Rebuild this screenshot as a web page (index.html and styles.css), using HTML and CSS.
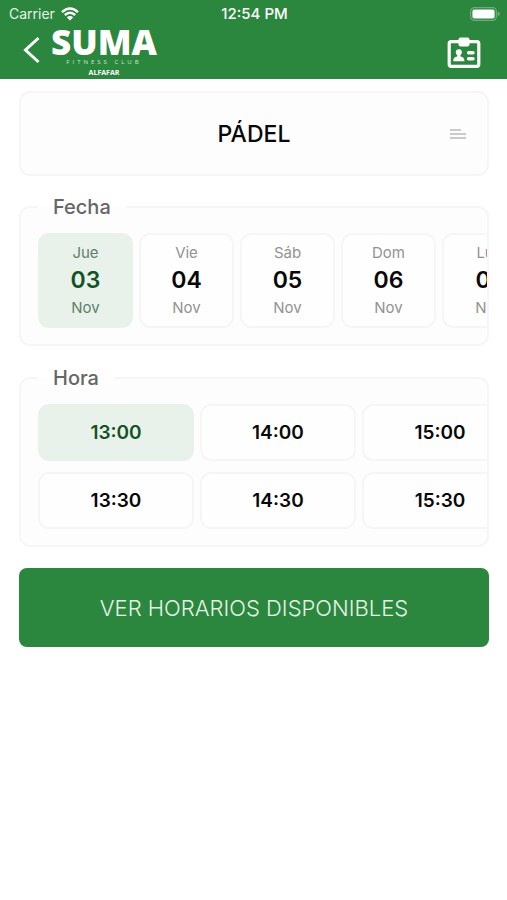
FILE: index.html
```html
<!DOCTYPE html>
<html lang="es">
<head>
<meta charset="utf-8">
<meta name="viewport" content="width=device-width, initial-scale=1">
<title>Suma Fitness Club</title>
<link rel="stylesheet" href="styles.css">
</head>
<body>
<header class="header">
  <div class="status">
    <div class="carrier">
      <span>Carrier</span>
      <svg class="wifi" viewBox="0 0 18 14" aria-hidden="true">
        <path d="M1 5.2Q9-2.2 17 5.2M3.8 8Q9 3.4 14.2 8" fill="none" stroke="currentColor" stroke-width="2.4"/>
        <path d="M9 13.6 5.8 10.2Q9 7.6 12.2 10.2Z" fill="currentColor"/>
      </svg>
    </div>
    <span class="time">12:54 PM</span>
    <svg class="battery" viewBox="0 0 30 14" aria-hidden="true">
      <rect x="0.6" y="0.6" width="25.8" height="12.8" rx="4" fill="none" stroke="#6dac7a" stroke-width="1.2"/>
      <rect x="2.4" y="2.4" width="22.2" height="9.2" rx="2" fill="#fff"/>
      <path d="M27.6 4.6Q30 5.6 30 7T27.6 9.4Z" fill="#6dac7a"/>
    </svg>
  </div>
  <div class="bar">
    <div class="brand">
      <button class="icon-button" type="button" aria-label="Volver">
        <svg class="back" viewBox="0 0 18 28" aria-hidden="true"><path d="M15.5 2 2.5 14 15.5 26" fill="none" stroke="currentColor" stroke-width="3"/></svg>
      </button>
      <div class="logo">
        <span class="logo-name">SUMA</span>
        <span class="logo-tag">FITNESS CLUB</span>
        <span class="logo-place">ALFAFAR</span>
      </div>
    </div>
    <button class="icon-button" type="button" aria-label="Carné">
      <svg class="badge" viewBox="0 0 34 32" aria-hidden="true">
        <rect x="2.2" y="4.7" width="29.6" height="24.6" rx="2" fill="none" stroke="currentColor" stroke-width="3.2"/>
        <rect x="11.5" y="0.6" width="11" height="9" rx="2" fill="currentColor"/>
        <circle cx="11.8" cy="15.2" r="3" fill="currentColor"/>
        <path d="M10.2 16.6h3.2v3q4 .4 4 4.6H6.2q0-4.2 4-4.6Z" fill="currentColor"/>
        <path d="M21.6 15.8h4.4M21.6 21.8h4.4" stroke="currentColor" stroke-width="3.4" stroke-linecap="round"/>
      </svg>
    </button>
  </div>
</header>
<main class="content">
  <button class="activity" type="button">
    <span class="activity-name">PÁDEL</span>
    <svg class="lines" viewBox="0 0 18 12" aria-hidden="true"><path d="M1 2h11M1 6h16M1 10h16" stroke="#b9b9b9" stroke-width="1.5"/></svg>
  </button>
  <fieldset class="group">
    <legend>Fecha</legend>
    <div class="days">
      <button class="option day selected" type="button" aria-pressed="true"><span>Jue</span><strong>03</strong><span>Nov</span></button>
      <button class="option day" type="button" aria-pressed="false"><span>Vie</span><strong>04</strong><span>Nov</span></button>
      <button class="option day" type="button" aria-pressed="false"><span>Sáb</span><strong>05</strong><span>Nov</span></button>
      <button class="option day" type="button" aria-pressed="false"><span>Dom</span><strong>06</strong><span>Nov</span></button>
      <button class="option day" type="button" aria-pressed="false"><span>Lun</span><strong>07</strong><span>Nov</span></button>
    </div>
  </fieldset>
  <fieldset class="group">
    <legend>Hora</legend>
    <div class="hours">
      <button class="option hour selected" type="button" aria-pressed="true">13:00</button>
      <button class="option hour" type="button" aria-pressed="false">13:30</button>
      <button class="option hour" type="button" aria-pressed="false">14:00</button>
      <button class="option hour" type="button" aria-pressed="false">14:30</button>
      <button class="option hour" type="button" aria-pressed="false">15:00</button>
      <button class="option hour" type="button" aria-pressed="false">15:30</button>
    </div>
  </fieldset>
  <button class="submit" type="button">VER HORARIOS DISPONIBLES</button>
</main>
</body>
</html>
```
FILE: styles.css
```css
* { box-sizing: border-box; }
body {
  margin: 0;
  background: #fff;
  color: #080808;
  font-family: Inter, "Liberation Sans", sans-serif;
}
button { font: inherit; color: inherit; cursor: pointer; }
svg { display: block; }

.header { background: #2b873e; color: #fff; }
.status {
  display: grid;
  grid-template-columns: 1fr auto 1fr;
  align-items: center;
  height: 27px;
  padding: 0 7px 0 9px;
  font-size: 14px;
}
.carrier { display: flex; align-items: center; gap: 6px; color: #e4f2e6; }
.wifi { width: 18px; height: 14px; color: #fff; }
.time { font-size: 15px; font-weight: 500; }
.battery { width: 30px; height: 14px; justify-self: end; }
.bar {
  display: flex;
  justify-content: space-between;
  height: 52px;
  padding: 0 26px 0 23px;
}
.brand { display: flex; gap: 10px; }
.icon-button {
  display: flex;
  align-items: center;
  padding: 0;
  border: 0;
  background: none;
}
.back { width: 18px; height: 28px; margin-bottom: 6px; }
.badge { width: 34px; height: 32px; }
.logo {
  display: flex;
  flex-direction: column;
  align-items: center;
  font-family: "Open Sans", "Noto Sans", sans-serif;
}
.logo-name { font-size: 35px; font-weight: 800; line-height: 30px; }
.logo-tag { color: #cfe6d3; font-size: 6px; line-height: 11px; letter-spacing: 3px; }
.logo-place { font-size: 7px; font-weight: 700; line-height: 10px; }

.content {
  display: flex;
  flex-direction: column;
  padding: 12px 18px 24px 19px;
}
.activity {
  display: grid;
  grid-template-columns: 1fr auto 1fr;
  align-items: center;
  height: 85px;
  margin-bottom: 18px;
  padding: 0 20px;
  border: 2px solid #f6f6f6;
  border-radius: 11px;
  background: #fdfdfd;
}
.activity-name { grid-column: 2; font-size: 23px; font-weight: 500; }
.lines { width: 18px; height: 12px; justify-self: end; }

.group {
  min-width: 0;
  margin: 0 0 19px;
  padding: 13px 0 16px 17px;
  border: 2px solid #f6f6f6;
  border-radius: 11px;
  background: #fdfdfd;
}
.group legend {
  padding: 0 15px;
  color: #666;
  font-size: 20px;
  font-weight: 500;
  line-height: 26px;
}
.option {
  flex: none;
  padding: 0;
  border: 2px solid #f6f6f6;
  border-radius: 11px;
  background: #fefefe;
}
.option.selected { border-color: #e9f2ea; background: #e9f2ea; color: #145226; }
.days { display: flex; gap: 6px; overflow: hidden; }
.day {
  display: flex;
  flex-direction: column;
  align-items: center;
  justify-content: center;
  width: 95px;
  height: 95px;
  padding-bottom: 2px;
}
.day span { color: #929292; font-size: 15px; line-height: 23px; }
.day.selected span { color: #61806a; }
.day strong { font-size: 23px; font-weight: 600; line-height: 32px; }
.hours {
  display: grid;
  grid-template-rows: 57px 57px;
  grid-auto-flow: column;
  grid-auto-columns: 156px;
  gap: 11px 6px;
  overflow: hidden;
}
.hour { font-size: 19px; font-weight: 600; }
.submit {
  height: 79px;
  margin-top: 2px;
  border: 0;
  border-radius: 8px;
  background: #2b873e;
  color: #e4f2e6;
  font-size: 22px;
  font-weight: 300;
}
```
